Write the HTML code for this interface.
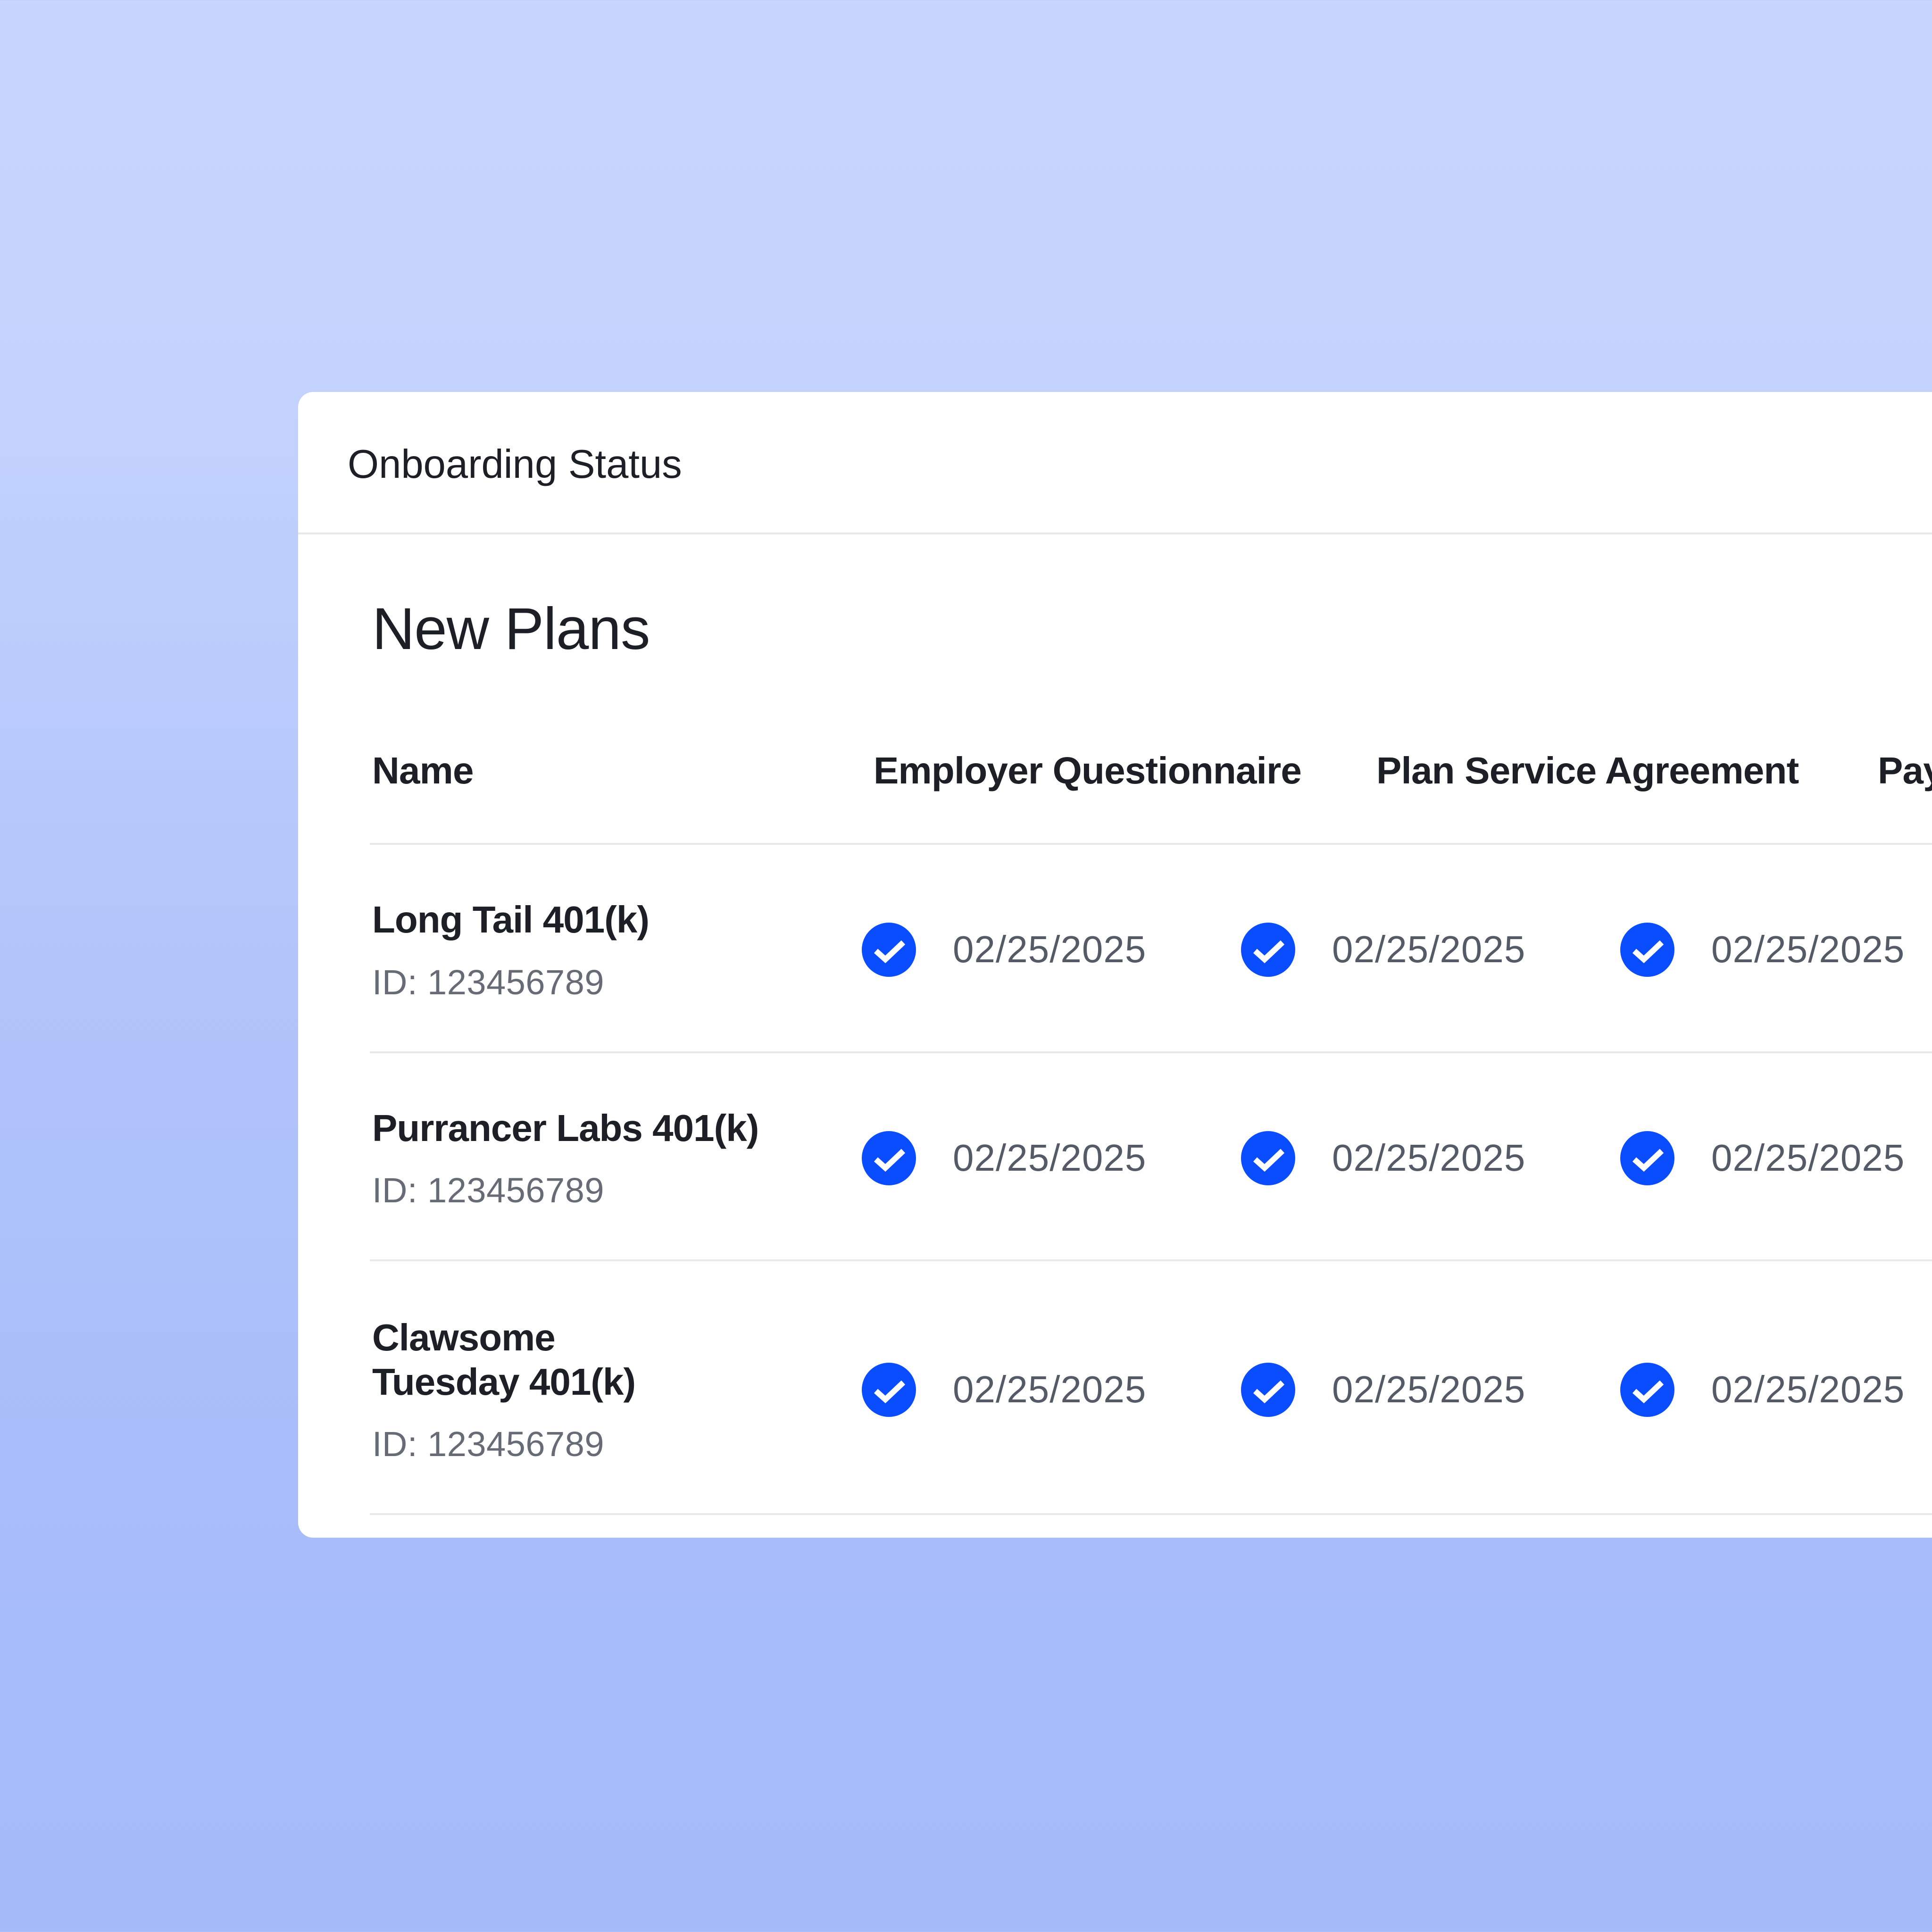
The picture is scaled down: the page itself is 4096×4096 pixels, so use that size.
<!DOCTYPE html>
<html><head><style>
html,body{margin:0;padding:0}
body{width:4096px;height:4096px;overflow:hidden;position:relative;font-family:"Liberation Sans",sans-serif;
background:linear-gradient(180deg,#c8d6fd 0%,#c4d3fd 20%,#b4c7fb 45%,#a8bdf9 75%,#a5bbf9 100%);}
.card{position:absolute;left:632px;top:831px;width:3600px;height:2429px;background:#fff;border-radius:32px;}
.t{position:absolute;white-space:nowrap;color:#1c1f26}
.hr{position:absolute;height:4px;background:#e6e8ec}
.chk{position:absolute;width:115px;height:115px;border-radius:50%;background:#0a4cff}
.chk svg{position:absolute;left:0;top:0}
.d{position:absolute;white-space:nowrap;color:#555b66;font-size:80px;letter-spacing:1px}
.nm{font-size:80px;font-weight:bold;letter-spacing:-1px}
.id{font-size:74px;color:#666b75;letter-spacing:0.5px}
.h{font-size:80px;font-weight:bold;letter-spacing:-0.8px}
</style></head><body>
<div class="card"></div>
<div class="t" style="left:737px;top:936px;font-size:85px">Onboarding Status</div>
<div class="hr" style="left:632px;top:1129px;width:3464px"></div>
<div class="t" style="left:789px;top:1262px;font-size:125px;letter-spacing:-1px">New Plans</div>
<div class="t h" style="left:789px;top:1588px">Name</div>
<div class="t h" style="left:1852px;top:1588px">Employer Questionnaire</div>
<div class="t h" style="left:2918px;top:1588px">Plan Service Agreement</div>
<div class="t h" style="left:3981px;top:1588px">Pay</div>
<div class="hr" style="left:784px;top:1787px;width:3312px"></div>

<div class="t nm" style="left:789px;top:1904px">Long Tail 401(k)</div>
<div class="t id" style="left:789px;top:2040px">ID: 123456789</div>
<div class="hr" style="left:784px;top:2229px;width:3312px"></div>

<div class="t nm" style="left:789px;top:2346px">Purrancer Labs 401(k)</div>
<div class="t id" style="left:789px;top:2481px">ID: 123456789</div>
<div class="hr" style="left:784px;top:2670px;width:3312px"></div>

<div class="t nm" style="left:789px;top:2790px">Clawsome</div>
<div class="t nm" style="left:789px;top:2884px">Tuesday 401(k)</div>
<div class="t id" style="left:789px;top:3019px">ID: 123456789</div>
<div class="hr" style="left:784px;top:3208px;width:3312px"></div>

<div id="rows"></div>
<script>
var ys=[2013,2455,2946],cx=[1884,2688,3492],dx=[2020,2824,3628],h='';
var svg='<svg width="115" height="115" viewBox="0 0 115 115"><path d="M30 60 L50 78 L88 42" fill="none" stroke="#fff" stroke-width="12"/></svg>';
ys.forEach(function(y){for(var i=0;i<3;i++){h+='<div class="chk" style="left:'+(cx[i]-57)+'px;top:'+(y-57)+'px">'+svg+'</div>';
h+='<div class="d" style="left:'+dx[i]+'px;top:'+(y-46)+'px">02/25/2025</div>';}});
document.getElementById('rows').innerHTML=h;
</script>
</body></html>
